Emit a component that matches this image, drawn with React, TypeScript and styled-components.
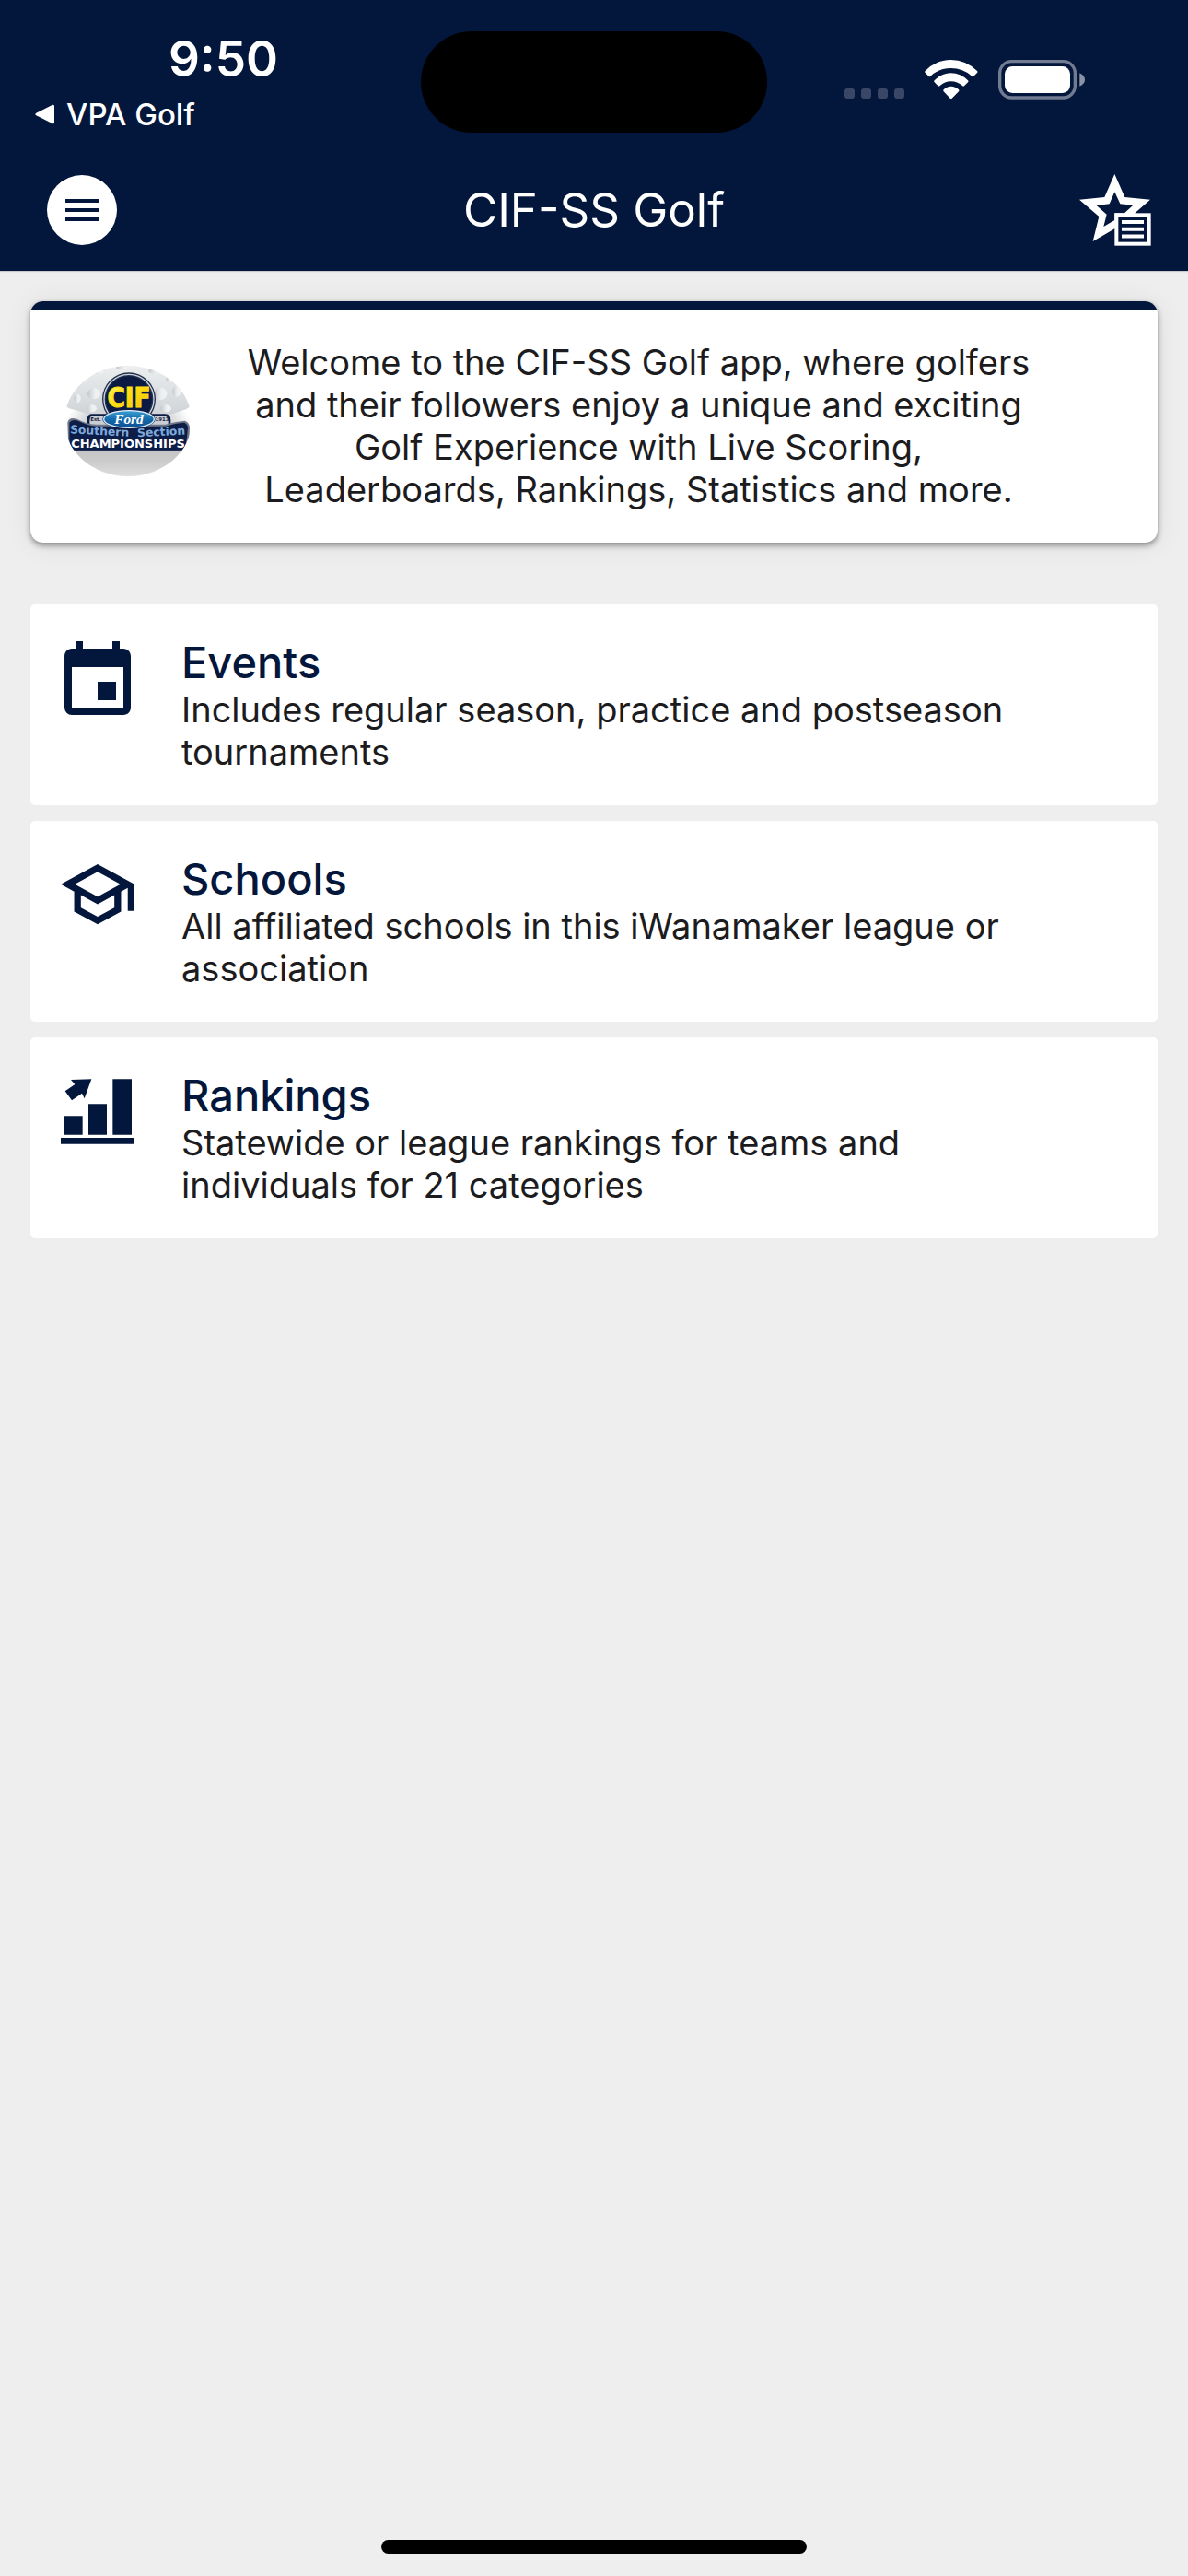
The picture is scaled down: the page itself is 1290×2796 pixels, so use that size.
import React from "react";
import styled, { createGlobalStyle } from "styled-components";

const navy = "#03163b";
const ink = "#1c1c1f";
const canvas = "#eeeeee";

const GlobalStyle = createGlobalStyle`
  *, *::before, *::after { box-sizing: border-box; }
  body {
    margin: 0;
    background: ${canvas};
    color: ${ink};
    font-family: Inter, "Liberation Sans", sans-serif;
  }
  h1, h2, p, ul { margin: 0; padding: 0; }
  svg { display: block; flex: none; }
`;

const Screen = styled.div`
  display: flex;
  flex-direction: column;
  min-height: 100vh;
`;

const Header = styled.header`
  background: ${navy};
  color: #fff;
  box-shadow: 0 1px 1px rgba(0, 0, 0, 0.15);
`;

const StatusBar = styled.div`
  display: grid;
  grid-template-columns: 1fr 376px 1fr;
  align-items: start;
  height: 162px;
  padding-top: 34px;
`;

const StatusLeft = styled.div`
  display: flex;
  flex-direction: column;
  gap: 10px;
  padding: 0 10px 0 38px;
`;

const Clock = styled.time`
  font-size: 53px;
  line-height: 60px;
  font-weight: 600;
  text-align: center;
`;

const BackLink = styled.a`
  display: flex;
  align-items: center;
  gap: 12px;
  color: inherit;
  font-size: 33px;
  line-height: 40px;
  font-weight: 500;
  text-decoration: none;
`;

const Island = styled.div`
  height: 110px;
  border-radius: 55px;
  background: #000;
`;

const StatusRight = styled.div`
  display: flex;
  justify-content: flex-end;
  align-items: flex-end;
  gap: 22px;
  padding: 31px 112px 0 0;
`;

const AppBar = styled.div`
  display: grid;
  grid-template-columns: 1fr auto 1fr;
  align-items: center;
  height: 132px;
  padding: 0 40px;
`;

const Title = styled.h1`
  font-size: 51px;
  line-height: 64px;
  font-weight: 400;
`;

const BarButton = styled.button`
  display: grid;
  place-items: center;
  padding: 0;
  border: 0;
  background: none;
  color: inherit;
  cursor: pointer;
`;

const MenuButton = styled(BarButton)`
  width: 76px;
  height: 76px;
  margin-left: 11px;
  border-radius: 50%;
  background: #fff;
  color: ${navy};
`;

const FavoritesButton = styled(BarButton)`
  justify-self: end;
`;

const Main = styled.main`
  flex: 1;
  display: flex;
  flex-direction: column;
  gap: 67px;
  padding: 33px;
`;

const WelcomeCard = styled.section`
  position: relative;
  display: flex;
  align-items: flex-start;
  padding: 43px 136px 35px 37px;
  border-radius: 14px;
  background: #fff;
  box-shadow: 0 3px 6px rgba(0, 0, 0, 0.4), 0 2px 30px rgba(0, 0, 0, 0.08);
  overflow: hidden;

  &::before {
    content: "";
    position: absolute;
    inset: 0 0 auto;
    height: 10px;
    background: ${navy};
  }
`;

const LogoSlot = styled.div`
  flex: none;
  padding-top: 27px;
`;

const BodyText = styled.p`
  font-size: 38px;
  line-height: 46px;
  font-weight: 400;
`;

const WelcomeText = styled(BodyText)`
  flex: 1;
  margin-left: 58px;
  text-align: center;
`;

const MenuList = styled.ul`
  display: flex;
  flex-direction: column;
  gap: 17px;
  list-style: none;
`;

const MenuCard = styled.a`
  display: flex;
  align-items: flex-start;
  gap: 43px;
  padding: 34px 150px 35px 25px;
  border-radius: 5px;
  background: #fff;
  color: inherit;
  text-decoration: none;
`;

const IconSlot = styled.span`
  flex: none;
  padding-top: 2px;
`;

const CardTitle = styled.h2`
  color: ${navy};
  font-size: 47px;
  line-height: 57px;
  font-weight: 500;
`;

const HomeArea = styled.footer`
  display: flex;
  justify-content: center;
  padding-bottom: 24px;
`;

const HomeIndicator = styled.div`
  width: 462px;
  height: 15px;
  border-radius: 8px;
  background: #000;
`;

const BackArrow = () => (
  <svg width="22" height="22" viewBox="0 0 66 66" fill="#fff" aria-hidden="true">
    <path d="M4 29 56 3q7-3 7 4v52q0 7-7 4L4 37q-6-4 0-8z" />
  </svg>
);

const SignalDots = () => (
  <svg width="65" height="12" viewBox="0 0 65 12" fill="#3a4665" aria-hidden="true">
    {[0, 18, 36, 54].map((x) => (
      <rect key={x} x={x} width="11" height="11" rx="3" />
    ))}
  </svg>
);

const Wifi = () => (
  <svg width="58" height="43" viewBox="431 195 174 129" fill="#fff" aria-hidden="true">
    <path d="M433 231Q469 195 517 195T602 231Q605 234 602 237L590 249Q588 251 585 248Q556 222 517 222T450 248Q447 251 445 249L433 237Q430 234 433 231z" />
    <path d="M463 262Q486 238 517 238T572 262Q575 265 572 268L560 280Q557 282 554 279Q538 265 517 265T481 279Q478 282 475 280L463 268Q460 265 463 262z" />
    <path d="M493 292Q503 281 517 281T542 292Q545 295 542 298L520 320Q517 322 514 320L493 298Q490 295 493 292z" />
  </svg>
);

const Battery = () => (
  <svg width="94" height="43" viewBox="672 195 282 129" aria-hidden="true">
    <rect x="677" y="200" width="245" height="118" rx="38" fill="none" stroke="#717b92" strokeWidth="10" />
    <rect x="693" y="216" width="213" height="87" rx="25" fill="#fff" />
    <path d="M937 238q17 8 17 21.500T937 281z" fill="#8a92a5" />
  </svg>
);

const MenuGlyph = () => (
  <svg width="48" height="48" viewBox="0 0 24 24" fill="currentColor" aria-hidden="true">
    <path d="M3 18h18v-2H3v2zm0-5h18v-2H3v2zm0-7v2h18V6H3z" />
  </svg>
);

const StarListGlyph = () => (
  <svg width="78" height="78" viewBox="936 570 234 234" aria-hidden="true">
    <path
      fill="#fff"
      fillRule="evenodd"
      d="M1051 570 1084 645 1167 653 1117 697V748H1051L980 789 1000 708 936 653 1018 645zM1051 628 1034 667 992 672 1025 701 1015 741 1051 720V697H1083L1111 671 1069 667z"
    />
    <rect x="1057" y="703" width="106" height="94" fill={navy} stroke="#fff" strokeWidth="12" />
    <path d="M1074 726h72M1074 749.500h72M1074 772.500h72" stroke="#fff" strokeWidth="12" />
  </svg>
);

const EventsIcon = () => (
  <svg width="96" height="96" viewBox="0 0 24 24" fill={navy} aria-hidden="true">
    <path d="M17 12h-5v5h5v-5zM16 1v2H8V1H6v2H5c-1.110 0-1.990.9-1.990 2L3 19a2 2 0 0 0 2 2h14c1.100 0 2-.9 2-2V5c0-1.100-.9-2-2-2h-1V1h-2zm3 18H5V8h14v11z" />
  </svg>
);

const SchoolsIcon = () => (
  <svg width="96" height="96" viewBox="-1.200 0 26.400 26.400" fill={navy} aria-hidden="true">
    <path d="M12 3L1 9l4 2.180v6L12 21l7-3.820v-6l2-1.090V17h2V9L12 3zm6.820 6L12 12.720 5.180 9 12 5.280 18.820 9zM17 15.990l-5 2.730-5-2.730v-3.720L12 15l5-2.730v3.720z" />
  </svg>
);

const RankingsIcon = () => (
  <svg width="96" height="96" viewBox="114 153 288 288" fill={navy} aria-hidden="true">
    <path d="M171 183 238 181 215 244 207 227 174 250 152 220 184 198z" />
    <path d="M148 301h61v61h-61zM228 262h60v100h-60zM307 181h62v181h-62zM138 372h240v20H138z" />
  </svg>
);

const dimples = [
  [128, 112, 21, 18],
  [74, 127, 11, 14],
  [345, 112, 21, 20],
  [397, 105, 14, 17],
  [92, 65, 16, 9],
  [142, 40, 18, 8],
  [325, 38, 20, 9],
  [374, 66, 12, 9],
  [222, 27, 22, 6],
  [120, 160, 17, 12],
  [362, 160, 18, 12],
];

const ChampionshipLogo = () => (
  <svg
    width="138"
    height="120"
    viewBox="32 21 414 360"
    role="img"
    aria-label="CIF Southern Section Championships"
    fontFamily='"DejaVu Sans", sans-serif'
    fontWeight="700"
  >
    <defs>
      <clipPath id="oval"><ellipse cx="239" cy="201" rx="207" ry="180" /></clipPath>
      <linearGradient id="ball" x1="0" y1="0" x2="0" y2="1">
        <stop offset="0" stopColor="#eceeef" />
        <stop offset="1" stopColor="#cdd1d5" />
      </linearGradient>
      <linearGradient id="dimple" x1="0" y1="0" x2="1" y2="0">
        <stop offset="0" stopColor="#c3c8cc" />
        <stop offset="0.600" stopColor="#eff0f1" />
      </linearGradient>
      <radialGradient id="haze" cx="0.500" cy="0.550" r="0.500">
        <stop offset="0.550" stopColor="#c4c6c9" />
        <stop offset="1" stopColor="#fff" />
      </radialGradient>
      <linearGradient id="ground" x1="0" y1="0" x2="0" y2="1">
        <stop offset="0" stopColor="#c2c2c3" />
        <stop offset="0.500" stopColor="#cbcbcc" />
        <stop offset="1" stopColor="#dedede" />
      </linearGradient>
      <linearGradient id="gold" x1="0" y1="0" x2="1" y2="1">
        <stop offset="0" stopColor="#fff27a" />
        <stop offset="0.400" stopColor="#ffdf10" />
        <stop offset="1" stopColor="#f2b705" />
      </linearGradient>
      <linearGradient id="blue" x1="0" y1="0" x2="0" y2="1">
        <stop offset="0" stopColor="#3ea0d4" />
        <stop offset="0.500" stopColor="#156bab" />
        <stop offset="1" stopColor="#0d4f93" />
      </linearGradient>
    </defs>
    <g clipPath="url(#oval)">
      <rect x="32" y="21" width="414" height="360" fill="#fff" />
      <ellipse cx="239" cy="205" rx="207" ry="110" fill="url(#haze)" />
      <path d="M32 21h414v130l-18 12Q386 176 340 195H138Q100 172 47 160L32 150z" fill="url(#ball)" />
      {dimples.map(([cx, cy, rx, ry]) => (
        <ellipse key={`${cx}-${cy}`} cx={cx} cy={cy} rx={rx} ry={ry} fill="url(#dimple)" />
      ))}
      <rect x="32" y="280" width="414" height="101" fill="url(#ground)" />
      <circle cx="242" cy="130" r="87" fill="#23304d" />
      <circle cx="242" cy="130" r="81" fill="none" stroke="#cfd6e2" strokeWidth="4" />
      <circle cx="242" cy="130" r="75" fill="#0a1a42" />
      <text
        x="242"
        y="156"
        fill="url(#gold)"
        stroke="#ffdf10"
        strokeWidth="3"
        fontSize="88"
        fontFamily='"Liberation Sans Narrow", "DejaVu Sans Condensed", sans-serif'
        textAnchor="middle"
      >
        CIF
      </text>
      <path d="M120 178h240q18 0 18 20v24H106v-24q0-20 14-20z" fill="#0e1d42" />
      <path d="M124 184h230q16 0 16 18v14H114v-14q0-18 10-18z" fill="#c9ced4" />
      <g fill="#1a2646" fontSize="16" textAnchor="middle">
        <text x="134" y="201">Est.</text>
        <text x="350" y="201">1913</text>
      </g>
      <path d="M42 206Q46 186 72 194Q104 210 134 212L360 212Q400 202 424 200Q440 206 440 224L438 262 430 280V297H50L44 262z" fill="#6d7787" />
      <path d="M48 206Q56 194 76 200Q108 216 138 218H360Q396 208 422 206Q434 210 434 224L430 262 424 296H54L48 262z" fill="#0c1e48" />
      <g fill="#7fa9dc" fontSize="37">
        <text x="50" y="241" transform="rotate(3 50 241)">Southern</text>
        <text x="270" y="253" transform="rotate(-3 270 253)">Section</text>
      </g>
      <text x="239" y="288" fill="#fff" fontSize="39" textAnchor="middle">
        CHAMPIONSHIPS
      </text>
      <ellipse cx="242" cy="195" rx="86" ry="31" fill="#0b2556" />
      <ellipse cx="242" cy="195" rx="82" ry="28" fill="url(#blue)" stroke="#e7f1f8" strokeWidth="4" />
      <text
        x="242"
        y="211"
        fill="#fff"
        fontSize="46"
        fontFamily='"Liberation Serif", serif'
        fontStyle="italic"
        textAnchor="middle"
      >
        Ford
      </text>
    </g>
  </svg>
);

const sections = [
  {
    href: "#events",
    title: "Events",
    text: "Includes regular season, practice and postseason tournaments",
    Icon: EventsIcon,
  },
  {
    href: "#schools",
    title: "Schools",
    text: "All affiliated schools in this iWanamaker league or association",
    Icon: SchoolsIcon,
  },
  {
    href: "#rankings",
    title: "Rankings",
    text: "Statewide or league rankings for teams and individuals for 21 categories",
    Icon: RankingsIcon,
  },
];

export default function App() {
  return (
    <Screen>
      <GlobalStyle />
      <Header>
        <StatusBar>
          <StatusLeft>
            <Clock>9:50</Clock>
            <BackLink href="#back">
              <BackArrow />
              VPA Golf
            </BackLink>
          </StatusLeft>
          <Island />
          <StatusRight>
            <SignalDots />
            <Wifi />
            <Battery />
          </StatusRight>
        </StatusBar>
        <AppBar>
          <MenuButton type="button" aria-label="Menu">
            <MenuGlyph />
          </MenuButton>
          <Title>CIF-SS Golf</Title>
          <FavoritesButton type="button" aria-label="Favorites">
            <StarListGlyph />
          </FavoritesButton>
        </AppBar>
      </Header>
      <Main>
        <WelcomeCard>
          <LogoSlot>
            <ChampionshipLogo />
          </LogoSlot>
          <WelcomeText>
            Welcome to the CIF-SS Golf app, where golfers and their followers enjoy a unique and
            exciting Golf Experience with Live Scoring, Leaderboards, Rankings, Statistics and more.
          </WelcomeText>
        </WelcomeCard>
        <MenuList>
          {sections.map(({ href, title, text, Icon }) => (
            <li key={href}>
              <MenuCard href={href}>
                <IconSlot>
                  <Icon />
                </IconSlot>
                <div>
                  <CardTitle>{title}</CardTitle>
                  <BodyText>{text}</BodyText>
                </div>
              </MenuCard>
            </li>
          ))}
        </MenuList>
      </Main>
      <HomeArea>
        <HomeIndicator />
      </HomeArea>
    </Screen>
  );
}
